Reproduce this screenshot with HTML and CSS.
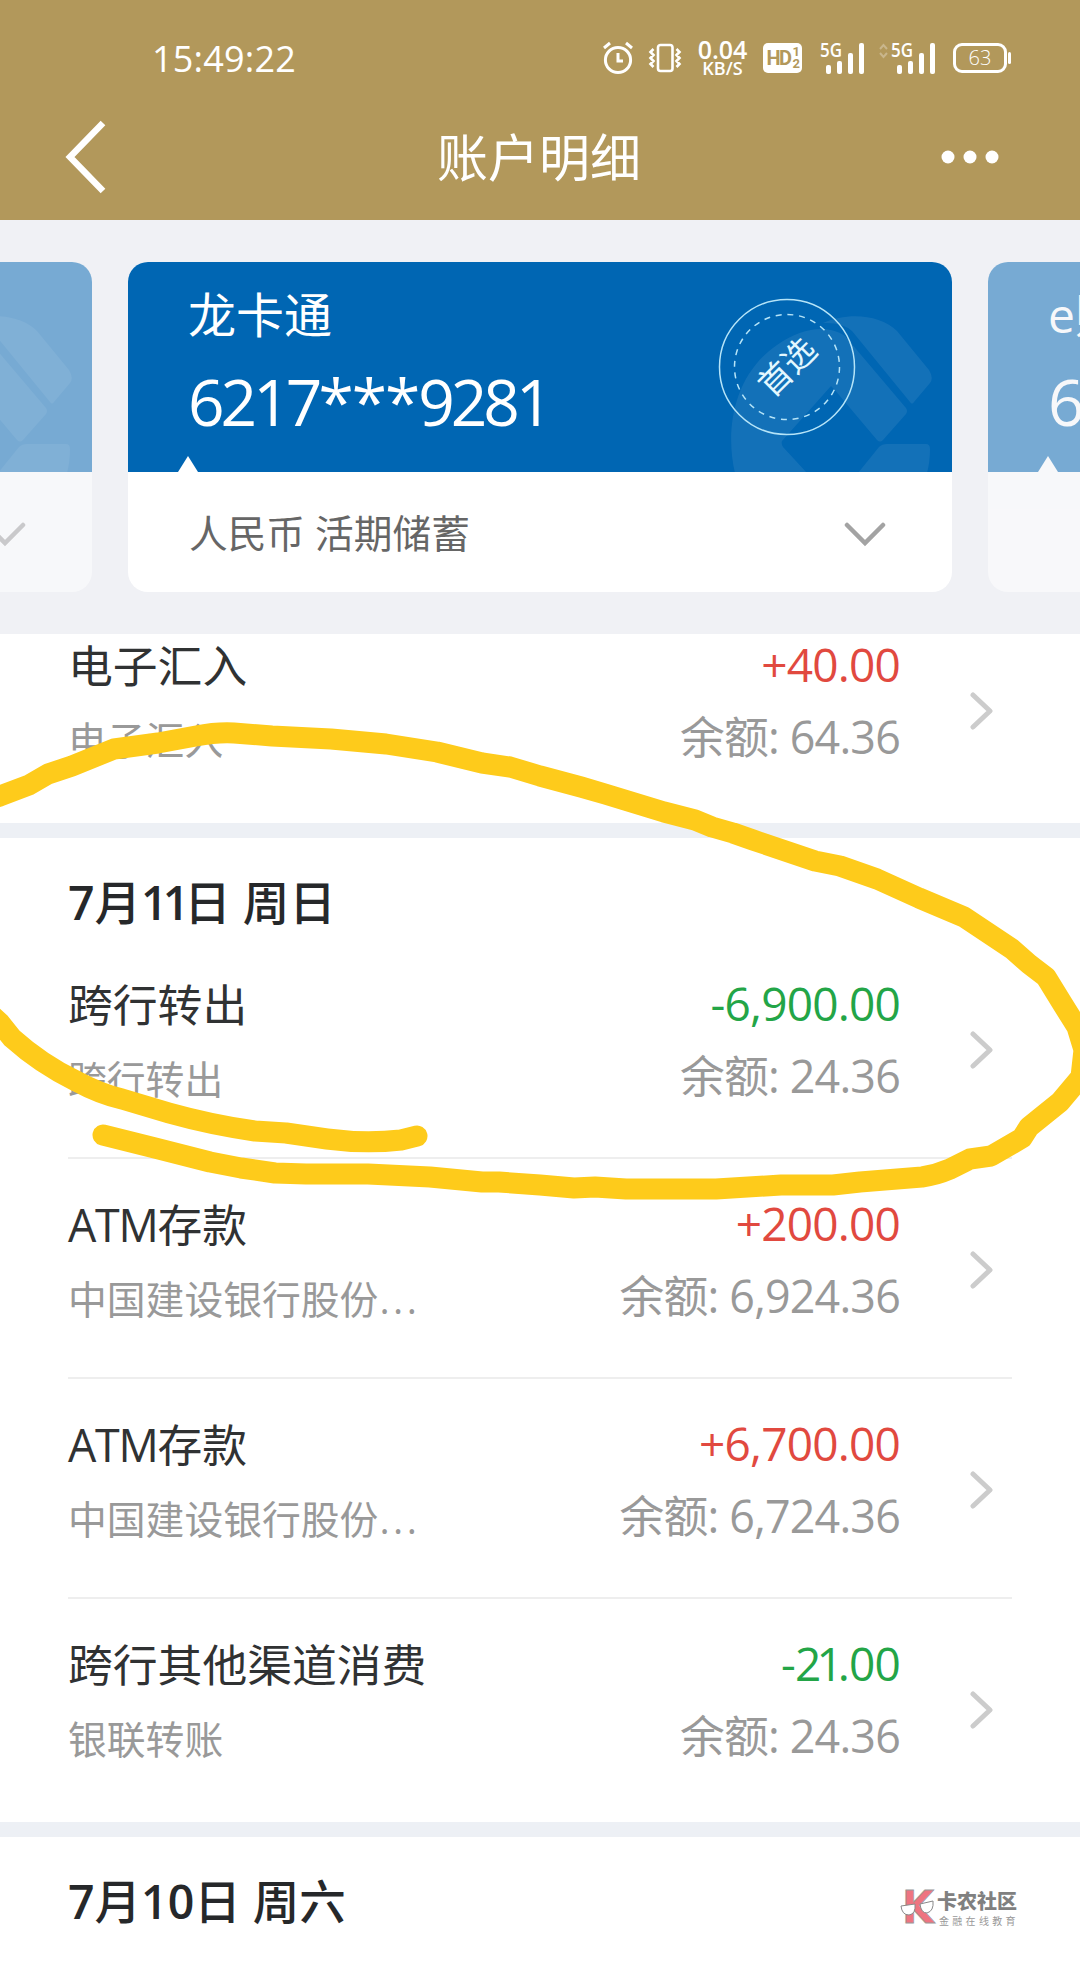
FILE: index.html
```html
<!DOCTYPE html>
<html lang="zh-CN">
<head>
  <meta charset="UTF-8" />
  <meta name="viewport" content="width=device-width, initial-scale=1.0"/>
  <title>账户明细</title>
  <link rel="stylesheet" href="styles.css">
</head>
<body>

<!-- shared shapes -->
<svg class="defs" width="0" height="0">
  <symbol id="bank-logo" viewBox="0 0 210 160">
    <path d="M8 160C-2 118 6 62 50 32C75 15 100 11 118 23L179 95Q181 98 179 101L156 127Q153 130 150 127L107 76L104 73L55 128Q54 131 56 134L80 160Z"/>
    <path d="M96 10C120 -1 153 1 170 18L202 57Q207 65 203 70L187 89Q185 92 183 89L125 18Q115 9 96 10Z"/>
    <path d="M131 160L152 134Q155 131 160 131H199Q203 131 203 136Q203 149 200 160Z"/>
  </symbol>
  <symbol id="arrow-down" viewBox="0 0 42 26">
    <path d="M3 4L21 22L39 4" fill="none" stroke="#a3a3a3" stroke-width="4.5" stroke-linecap="round"/>
  </symbol>
  <symbol id="arrow-right" viewBox="0 0 24 38">
    <path d="M3 3L20 19L3 35" fill="none" stroke="#ccc" stroke-width="5" stroke-linecap="round" stroke-linejoin="round"/>
  </symbol>
</svg>

<header>
  <div class="status-bar">
    <span class="clock">15:49:22</span>
    <svg class="alarm" width="30" height="32" viewBox="0 0 30 32" fill="none" stroke="#fff" stroke-width="3">
      <circle cx="15" cy="18" r="12.6"/>
      <path d="M15 11V19H20M1 6L7 1M29 6L23 1"/>
    </svg>
    <svg class="vibrate" width="32" height="30" viewBox="0 0 32 30" fill="none" stroke="#fff" stroke-width="2.6">
      <rect x="9" y="2" width="14.5" height="26" rx="2.5"/>
      <path d="M4.5 6L1.5 9L4.5 12L1.5 15L4.5 18L1.5 21L4.5 24M27.5 6L30.5 9L27.5 12L30.5 15L27.5 18L30.5 21L27.5 24"/>
    </svg>
    <div class="speed"><b>0.04</b><span>KB/S</span></div>
    <div class="hd">HD<div class="hd-sim"><i>1</i><i>2</i></div></div>
    <svg class="signal" width="44" height="32" viewBox="0 0 44 32" fill="#fff">
      <text x="0" y="15" textLength="22" lengthAdjust="spacingAndGlyphs">5G</text>
      <rect x="6" y="23" width="5" height="9" rx="2"/><rect x="17" y="19" width="5" height="13" rx="2"/>
      <rect x="28" y="11" width="5" height="21" rx="2"/><rect x="39" y="1" width="5" height="31" rx="2"/>
    </svg>
    <svg class="signal data" width="56" height="32" viewBox="0 0 56 32" fill="#fff">
      <path d="M1 7L4.5 3L8 7M1 11L4.5 15L8 11" fill="none" stroke="#c9b68c" stroke-width="2"/>
      <text x="12" y="15" textLength="22" lengthAdjust="spacingAndGlyphs">5G</text>
      <rect x="18" y="23" width="5" height="9" rx="2"/><rect x="29" y="19" width="5" height="13" rx="2"/>
      <rect x="40" y="11" width="5" height="21" rx="2"/><rect x="51" y="1" width="5" height="31" rx="2"/>
    </svg>
    <div class="battery">63</div>
  </div>
  <nav>
    <svg class="back" width="44" height="74" viewBox="0 0 44 74">
      <path d="M39 3L6 37L39 71" fill="none" stroke="#fff" stroke-width="6.5"/>
    </svg>
    <h1>账户明细</h1>
    <svg class="more" width="58" height="14" viewBox="0 0 58 14" fill="#fff">
      <circle cx="7" cy="7" r="6.5"/><circle cx="29" cy="7" r="6.5"/><circle cx="51" cy="7" r="6.5"/>
    </svg>
  </nav>
</header>

<section class="cards">
  <div class="card side">
    <div class="card-head">
      <svg class="watermark" width="210" height="160"><use href="#bank-logo"/></svg>
    </div>
    <div class="card-foot">
      <span></span>
      <svg width="42" height="26"><use href="#arrow-down"/></svg>
    </div>
  </div>

  <div class="card">
    <div class="card-head">
      <svg class="watermark" width="210" height="160"><use href="#bank-logo"/></svg>
      <p class="card-name">龙卡通</p>
      <p class="card-number">6217<span class="stars">***</span>9281</p>
      <svg class="seal" width="138" height="138" viewBox="0 0 138 138">
        <circle cx="69" cy="69" r="67.5"/>
        <circle cx="69" cy="69" r="52.5" stroke-dasharray="6 5.78"/>
        <text x="69" y="81" text-anchor="middle" transform="rotate(-45 69 69)">首选</text>
      </svg>
    </div>
    <div class="card-foot">
      <span>人民币 活期储蓄</span>
      <svg width="42" height="26"><use href="#arrow-down"/></svg>
    </div>
  </div>

  <div class="card side">
    <div class="card-head">
      <p class="card-name">e账户</p>
      <p class="card-number">6</p>
    </div>
    <div class="card-foot"></div>
  </div>
</section>

<main>
  <section class="day first">
    <div class="row">
      <div class="info"><p class="title">电子汇入</p><p class="desc">电子汇入</p></div>
      <div class="money"><p class="amount in">+40.00</p><p class="balance">余额: 64.36</p></div>
      <svg width="24" height="38"><use href="#arrow-right"/></svg>
    </div>
  </section>

  <section class="day">
    <h2><b>7</b>月<b class="ones">11</b>日 周日</h2>
    <div class="row">
      <div class="info"><p class="title">跨行转出</p><p class="desc">跨行转出</p></div>
      <div class="money"><p class="amount out">-6,900.00</p><p class="balance">余额: 24.36</p></div>
      <svg width="24" height="38"><use href="#arrow-right"/></svg>
    </div>
    <div class="row">
      <div class="info"><p class="title"><span class="latin">ATM</span>存款</p><p class="desc">中国建设银行股份<span class="dots">...</span></p></div>
      <div class="money"><p class="amount in">+200.00</p><p class="balance">余额: 6,924.36</p></div>
      <svg width="24" height="38"><use href="#arrow-right"/></svg>
    </div>
    <div class="row">
      <div class="info"><p class="title"><span class="latin">ATM</span>存款</p><p class="desc">中国建设银行股份<span class="dots">...</span></p></div>
      <div class="money"><p class="amount in">+6,700.00</p><p class="balance">余额: 6,724.36</p></div>
      <svg width="24" height="38"><use href="#arrow-right"/></svg>
    </div>
    <div class="row">
      <div class="info"><p class="title">跨行其他渠道消费</p><p class="desc">银联转账</p></div>
      <div class="money"><p class="amount out">-<span class="ones">21</span>.00</p><p class="balance">余额: 24.36</p></div>
      <svg width="24" height="38"><use href="#arrow-right"/></svg>
    </div>
  </section>

  <section class="day">
    <h2><b>7</b>月<b>10</b>日 周六</h2>
  </section>
</main>

<!-- hand-drawn marker -->
<svg class="marker" width="1080" height="1979" viewBox="0 0 1080 1979">
  <path d="M-20 803L0 796L29 785L48 774L72 766L114 749L158 743L196 736Q217 732 234 733L272 736L331 739L386 744L437 752L482 763L510 767L540 776L581 787L605 794L664 812L695 820L712 827L733 833L753 840L815 861L840 866L877 879L919 898L964 917L988 933L1012 949L1029 964L1046 977L1062 1003L1077 1027L1084 1050L1081 1077L1060 1102L1029 1127L1022 1138L991 1156L970 1159L950 1169Q936 1175 922 1177L860 1182L833 1185H781L716 1189H626L595 1187L574 1188L540 1185L499 1182H482L430 1177L368 1174L306 1174L275 1173L241 1168L210 1162L155 1148L103 1135"/>
  <path d="M-12 1012L0 1023L12 1038Q41 1064 76 1081Q100 1094 122 1099L169 1113Q212 1125 255 1131L286 1133L327 1139Q365 1144 401 1140L417 1136"/>
</svg>

<div class="brand">
  <svg width="36" height="38" viewBox="0 0 36 38">
    <text x="2" y="34" textLength="32" lengthAdjust="spacingAndGlyphs">K</text>
    <path d="M1 17L15 15Q16 25 9 26Q2 26 1 17ZM20 15L33 12Q34 22 27 24Q21 24 20 15Z" fill="#fff" stroke="#888" stroke-width="1"/>
  </svg>
  <div class="brand-text"><b>卡农社区</b><span>金融在线教育</span></div>
</div>

</body>
</html>
```

FILE: styles.css
```css
* {
  box-sizing: border-box;
}

body {
  margin: 0;
  position: relative;
  width: 1080px;
  height: 1979px;
  overflow: hidden;
  font-family: 'Open Sans', 'Noto Sans CJK SC', sans-serif;
  background: #f0f1f5;
  color: #303233;
}

p, h1, h2 {
  margin: 0;
  font-weight: normal;
}

svg {
  display: block;
  flex: none;
  overflow: visible;
}

.defs {
  position: absolute;
}

/* Header */
header {
  height: 220px;
  background: #b2985b;
  color: #fff;
}

.status-bar {
  height: 116px;
  padding: 0 69px 0 152px;
  display: flex;
  align-items: center;
}

.clock {
  margin-right: auto;
  font-size: 36px;
  letter-spacing: 0.2px;
}

.vibrate {
  margin-left: 16px;
}

.speed {
  width: 57px;
  margin-left: 13px;
  display: flex;
  flex-direction: column;
  align-items: center;
  font-weight: 600;
}

.speed b {
  font-size: 25px;
  line-height: 20px;
  font-weight: 600;
}

.speed span {
  font-size: 18px;
  line-height: 19px;
}

.hd {
  width: 39px;
  height: 30px;
  margin-left: 12px;
  display: flex;
  align-items: center;
  justify-content: center;
  border-radius: 5px;
  background: #fff;
  color: #b2985b;
  font: bold 20px/30px 'Roboto', sans-serif;
  letter-spacing: -1.5px;
}

.hd-sim {
  display: flex;
  flex-direction: column;
  padding-left: 2px;
}

.hd-sim i {
  font: bold 13px/12px 'Roboto', sans-serif;
}

.signal {
  margin-left: 18px;
}

.signal text {
  font: 600 20px 'Open Sans', sans-serif;
}

.signal.data {
  margin-left: 15px;
}

.battery {
  position: relative;
  width: 54px;
  height: 30px;
  margin: 0 4px 0 18px;
  border: 3px solid #fff;
  border-radius: 9px;
  font-size: 20px;
  font-weight: 300;
  line-height: 23px;
  text-align: center;
}

.battery::after {
  content: "";
  position: absolute;
  right: -7px;
  top: 6px;
  width: 3px;
  height: 12px;
  border-radius: 2px;
  background: #fff;
}

nav {
  height: 82px;
  padding: 0 81px 0 64px;
  display: grid;
  grid-template-columns: 129px 1fr 114px;
  align-items: center;
}

nav h1 {
  font-size: 51px;
  line-height: 80px;
  text-align: center;
}

nav .more {
  justify-self: end;
}

/* Account cards */
.cards {
  height: 414px;
  padding-top: 42px;
  display: flex;
  justify-content: center;
  gap: 36px;
  overflow: hidden;
}

.card {
  flex: none;
  width: 824px;
  height: 330px;
  border-radius: 20px;
  background: #fff;
  overflow: hidden;
}

.card.side {
  opacity: 0.5;
}

.card-head {
  position: relative;
  height: 210px;
  padding: 20px 60px 0;
  background: #0066b3;
  color: #fff;
}

.card-head::after {
  content: "";
  position: absolute;
  left: 50px;
  bottom: 0;
  border: 10px solid transparent;
  border-top: 0;
  border-bottom: 16px solid #fff;
}

.card-name {
  font-size: 48px;
  line-height: 66px;
}

.card-number {
  font-size: 64px;
  line-height: 107px;
  letter-spacing: -4px;
}

.card-number .stars {
  letter-spacing: -2px;
}

.watermark {
  position: absolute;
  right: 15px;
  bottom: -1px;
  fill: rgba(255, 255, 255, 0.075);
}

.seal {
  position: absolute;
  left: 590px;
  top: 36px;
  fill: none;
  stroke: #b5e4f8;
  stroke-width: 1.5;
}

.seal text {
  fill: #e3f8ff;
  stroke: none;
  font-size: 33px;
}

.card-foot {
  height: 120px;
  padding: 2px 66px 0 61px;
  display: flex;
  align-items: center;
  justify-content: space-between;
  font-size: 38.7px;
  color: #666;
}

.card-foot span {
  padding-bottom: 4px;
}

.card-foot svg {
  margin-top: 2px;
}

/* Transactions */
.day {
  background: #fff;
  padding-bottom: 3px;
  border-bottom: 15px solid #edf0f5;
}

.day:last-child {
  height: 150px;
  border: 0;
}

.day.first {
  height: 204px;
  display: flex;
  flex-direction: column;
  justify-content: flex-end;
  overflow: hidden;
}

.day h2 {
  height: 101px;
  padding-left: 68px;
  font-size: 46.5px;
  line-height: 129px;
  font-weight: 500;
  color: #26282a;
}

.day h2 b {
  font-weight: 600;
}

.ones {
  letter-spacing: -5px;
}

.row {
  flex: none;
  height: 220px;
  margin: 0 68px;
  display: flex;
  align-items: center;
  padding: 4px 18px 0 0;
  border-bottom: 2px solid #eee;
}

.row:last-child {
  border-color: transparent;
}

.info, .money {
  align-self: flex-start;
  padding-top: 25px;
}

.money {
  margin-left: auto;
  margin-right: 70px;
  text-align: right;
}

.title, .desc, .amount, .balance {
  height: 73px;
  line-height: 73px;
  font-size: 44.8px;
  white-space: nowrap;
}

.title .latin {
  letter-spacing: -1.3px;
}

.desc {
  font-size: 38.8px;
  line-height: 76px;
  color: #999;
}

.dots {
  padding-left: 1px;
  letter-spacing: 3.5px;
}

.amount {
  font-size: 46px;
  line-height: 71px;
  letter-spacing: -0.8px;
}

.amount .ones {
  letter-spacing: -5px;
}

.balance {
  color: #999;
  line-height: 69px;
  letter-spacing: -0.8px;
}

.in {
  color: #e1493f;
}

.out {
  color: #23a547;
}

/* Overlays */
.marker {
  position: absolute;
  left: 0;
  top: 0;
  fill: none;
  stroke: #fecb1b;
  stroke-width: 21;
  stroke-linecap: round;
  stroke-linejoin: round;
}

.brand {
  position: absolute;
  left: 900px;
  top: 1889px;
  display: flex;
  gap: 1px;
}

.brand svg text {
  font: bold 44px 'DejaVu Sans', sans-serif;
  fill: #ee7480;
  stroke: #999;
  stroke-width: 0.8;
}

.brand-text {
  display: flex;
  flex-direction: column;
  color: #808080;
}

.brand-text b {
  font-size: 20px;
  line-height: 26px;
  font-weight: 900;
}

.brand-text span {
  padding-left: 2px;
  font-size: 10px;
  line-height: 12px;
  letter-spacing: 3.3px;
  color: #999;
}
```
